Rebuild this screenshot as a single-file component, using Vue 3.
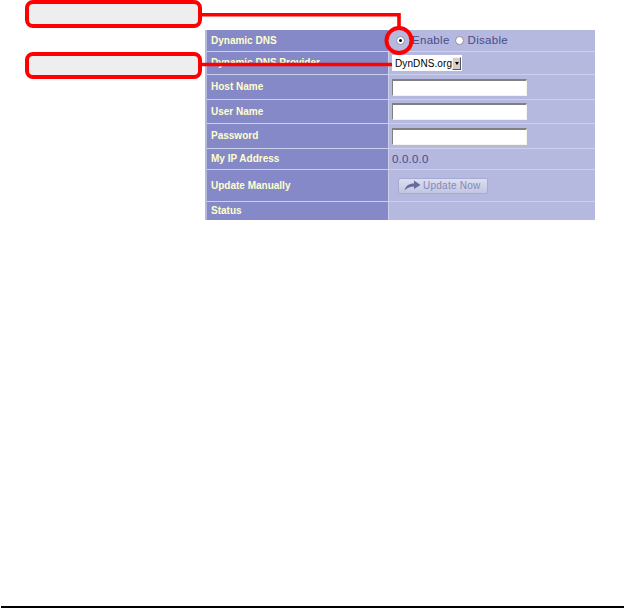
<script setup>
const rows = [
  { label: 'Dynamic DNS', kind: 'radio', h: 22 },
  { label: 'Dynamic DNS Provider', kind: 'select', h: 23 },
  { label: 'Host Name', kind: 'input', h: 25 },
  { label: 'User Name', kind: 'input', h: 24 },
  { label: 'Password', kind: 'input', h: 25 },
  { label: 'My IP Address', kind: 'ip', h: 21 },
  { label: 'Update Manually', kind: 'button', h: 32 },
  { label: 'Status', kind: 'none', h: 18 }
]
</script>

<template>
  <div class="page">
    <div class="table">
      <div v-for="r in rows" :key="r.label" class="row" :style="{ height: r.h + 'px' }">
        <div class="label">{{ r.label }}</div>
        <div class="value">
          <div v-if="r.kind === 'radio'" class="radios">
            <span class="radio on"></span><span class="opt">Enable</span>
            <span class="radio"></span><span class="opt">Disable</span>
          </div>
          <div v-else-if="r.kind === 'select'" class="select">
            <span class="sel-text">DynDNS.org</span>
            <span class="sel-btn"><i></i></span>
          </div>
          <div v-else-if="r.kind === 'input'" class="input"></div>
          <div v-else-if="r.kind === 'ip'" class="ip">0.0.0.0</div>
          <div v-else-if="r.kind === 'button'" class="btn">
            <svg width="17" height="11" viewBox="0 0 17 11">
              <path d="M0.5 10.5C1.5 6 5 3.5 10 3.5V0.5L16.5 5L10 9V6.5C6.5 6.5 3 8 0.5 10.5Z" fill="#666b9c" />
            </svg>
            <span>Update Now</span>
          </div>
        </div>
      </div>
    </div>
    <div class="rule"></div>

    <div class="callout first"></div>
    <div class="callout second"></div>
    <svg class="lines" width="624" height="100" viewBox="0 0 624 100">
      <path d="M200 14.7H399V30" fill="none" stroke="#ff0000" stroke-width="3.6" />
      <path d="M200 64.5H392" fill="none" stroke="#ff0000" stroke-width="3.6" />
      <circle cx="399" cy="40.5" r="12.5" fill="none" stroke="#ff0000" stroke-width="4" />
    </svg>
  </div>
</template>

<style scoped>
.page {
  position: relative;
  width: 624px;
  height: 608px;
  background: #fff;
  overflow: hidden;
  display: flex;
  flex-direction: column;
  justify-content: space-between;
  font-family: "Liberation Sans", Arial, sans-serif;
}
.table {
  margin: 30px 0 0 205px;
  width: 390px;
  display: flex;
  flex-direction: column;
  border-left: 2px solid #b5b8df;
  box-sizing: border-box;
}
.row {
  display: grid;
  grid-template-columns: 181px 1fr;
  box-sizing: border-box;
  border-bottom: 1px solid #cdd0ec;
}
.row:last-child { border-bottom: 0; }
.label {
  background: #8589c7;
  color: #ffffcc;
  font-size: 10px;
  font-weight: bold;
  padding: 0 0 1px 4px;
  display: flex;
  align-items: center;
  white-space: nowrap;
  overflow: hidden;
}
.value {
  background: #b5b8df;
  border-left: 1px solid #cdd0ec;
  padding-left: 3px;
  display: flex;
  align-items: center;
  color: #4a4a88;
  font-size: 11.5px;
  min-width: 0;
}
.radios {
  display: flex;
  align-items: center;
  margin-left: 4px;
}
.radio {
  width: 7px;
  height: 7px;
  border-radius: 50%;
  background: #fff;
  border: 1px solid #8e8e9e;
  position: relative;
  margin-right: 4px;
}
.radio.on { margin-right: 7px; }
.radio.on::after {
  content: "";
  position: absolute;
  left: 2px;
  top: 2px;
  width: 3px;
  height: 3px;
  border-radius: 50%;
  background: #000;
}
.opt { margin-right: 5px; letter-spacing: 0.3px; padding-bottom: 1px; }
.select {
  width: 70px;
  height: 16px;
  background: #fff;
  display: flex;
  align-items: center;
  justify-content: space-between;
  box-sizing: border-box;
  padding: 0 1px 0 3px;
  color: #000;
  font-size: 10px;
}
.sel-text { letter-spacing: 0.1px; }
.sel-btn {
  width: 9px;
  height: 13px;
  box-sizing: border-box;
  background: #d4d0c8;
  border: 1px solid #555;
  border-top-color: #f2f2f2;
  border-left-color: #f2f2f2;
  display: flex;
  align-items: center;
  justify-content: center;
}
.sel-btn i {
  width: 0;
  height: 0;
  border-left: 2px solid transparent;
  border-right: 2px solid transparent;
  border-top: 3px solid #000;
}
.input {
  width: 135px;
  height: 17px;
  box-sizing: border-box;
  background: #fff;
  border: 1px solid #f4f4ea;
  border-top: 2px solid #808080;
  border-left: 1px solid #808080;
}
.ip { letter-spacing: 0.2px; padding-bottom: 1px; }
.btn {
  margin-left: 6px;
  width: 90px;
  height: 16px;
  box-sizing: border-box;
  border: 1px solid #a7aad2;
  border-radius: 2px;
  background: linear-gradient(#dcdef0, #c3c6e2);
  display: flex;
  align-items: center;
  gap: 2px;
  padding-left: 5px;
  color: #8488b8;
  font-size: 10px;
  letter-spacing: 0.25px;
  white-space: nowrap;
}
.rule {
  height: 2px;
  margin-left: 1px;
  background: #000;
}
.callout {
  position: absolute;
  left: 25px;
  width: 177px;
  height: 28px;
  box-sizing: border-box;
  background: #eeeeee;
  border: 4px solid #ff0000;
  border-radius: 8px;
}
.first { top: 0; }
.second { top: 52px; height: 27px; }
.lines {
  position: absolute;
  left: 0;
  top: 0;
}
</style>
